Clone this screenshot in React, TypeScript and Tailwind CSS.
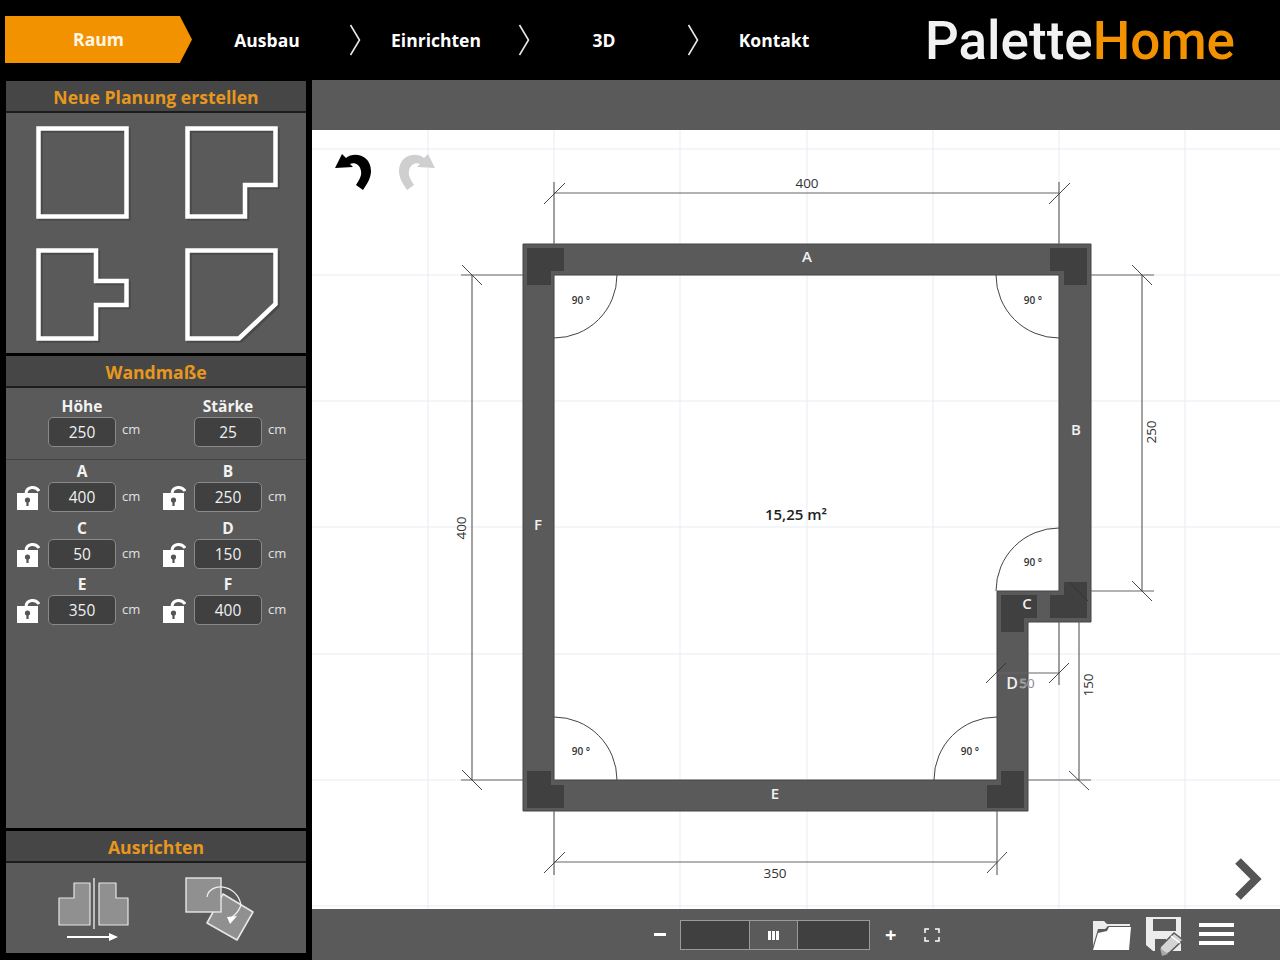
import React from "react";

const font = "[font-family:'Open_Sans',sans-serif]";

const Chevron = () => (
  <svg width="12" height="32" viewBox="0 0 12 32" className="shrink-0">
    <path d="M1.5 1 L10.5 16 L1.5 31" fill="none" stroke="#e8e8e8" strokeWidth="1.6" />
  </svg>
);

const NavItem = ({ label }: { label: string }) => (
  <div className="w-[150px] text-center text-[17.5px] font-bold text-white">{label}</div>
);

const Header = () => (
  <div className="h-20 flex items-center shrink-0 bg-black">
    <div className="ml-[5px] w-[187px] h-[47px] mt-[-1px] bg-[#f39200] flex items-center justify-center text-[17.5px] font-bold text-[#fff6e5] [clip-path:polygon(0_0,93.5%_0,100%_50%,93.5%_100%,0_100%)]">
      Raum
    </div>
    <NavItem label="Ausbau" />
    <div className="w-[19px] flex justify-center pl-[7px]">
      <Chevron />
    </div>
    <NavItem label="Einrichten" />
    <div className="w-[18px] flex justify-center pl-[7px]">
      <Chevron />
    </div>
    <NavItem label="3D" />
    <div className="w-[20px] flex justify-center pl-[7px]">
      <Chevron />
    </div>
    <NavItem label="Kontakt" />
    <div className="ml-[76px] flex text-[53px] leading-none font-medium [font-family:'Roboto',sans-serif] mt-[2px]">
      <span className="text-[#f2f2f2]">Palette</span>
      <span className="text-[#f39200]">Home</span>
    </div>
  </div>
);

const PanelTitle = ({ children }: { children: React.ReactNode }) => (
  <div className="h-[32px] shrink-0 pt-[2px] bg-[#464646] border-b-2 border-[#1c1c1c] flex items-center justify-center text-[17.6px] font-bold text-[#e8971e]">
    {children}
  </div>
);

const Shape = ({ d }: { d: string }) => (
  <svg width="98" height="98" viewBox="0 0 98 98" className="shrink-0 overflow-visible">
    <path d={d} fill="none" stroke="#000" strokeOpacity="0.18" strokeWidth="4.5" transform="translate(2 2)" />
    <path d={d} fill="none" stroke="#fff" strokeWidth="4.5" />
  </svg>
);

const shapes = [
  "M2.5 2.5H90.5V90.5H2.5Z",
  "M2.5 2.5H90.5V59H60V90.5H2.5Z",
  "M2.5 2.5H60V33H90.5V57H60V90.5H2.5Z",
  "M2.5 2.5H90.5V56L54 90.5H2.5Z",
];

const Lock = () => (
  <svg width="24" height="26" viewBox="0 0 24 26" className="shrink-0">
    <path d="M10 8 C11 1 20 1 23 6" fill="none" stroke="#fff" strokeWidth="3" />
    <rect x="1" y="8" width="21" height="17" fill="#fff" />
    <circle cx="11.5" cy="15" r="2.6" fill="#555" />
    <rect x="10.4" y="15" width="2.2" height="6" fill="#555" />
  </svg>
);

const NumberBox = ({ value }: { value: string }) => (
  <div className="w-[68px] h-[30px] pt-[2px] rounded-[5px] border border-[#8a8a8a] bg-[#404040] flex items-center justify-center text-[15.5px] text-[#f0f0f0]">
    {value}
  </div>
);

const Field = ({ label, value, lock }: { label: string; value: string; lock?: boolean }) => (
  <div className="w-[146px] flex flex-col">
    <div className="pl-[42px] w-[110px] text-center text-[15.5px] leading-[20px] font-bold text-[#f2f2f2] mt-[-1px]">{label}</div>
    <div className="flex items-start mt-[1px]">
      <div className="w-[42px] pl-[10px] pt-[3px]">{lock && <Lock />}</div>
      <NumberBox value={value} />
      <span className={"ml-[6px] text-[13px] leading-[20px] text-[#e0e0e0] " + (lock ? "mt-[4px]" : "mt-[2px]")}>cm</span>
    </div>
  </div>
);

const walls = [
  ["A", "400", "B", "250"],
  ["C", "50", "D", "150"],
  ["E", "350", "F", "400"],
];

const Sidebar = () => (
  <div className="w-[312px] shrink-0 pl-[6px] pr-[6px] pt-[1px] flex flex-col gap-[3px] bg-black">
    <div className="h-[272px] flex flex-col bg-[#5a5a5a]">
      <PanelTitle>Neue Planung erstellen</PanelTitle>
      <div className="pl-[30px] pt-[13px] grid grid-cols-[149px_98px] gap-y-[24px]">
        {shapes.map((d) => (
          <Shape key={d} d={d} />
        ))}
      </div>
    </div>
    <div className="h-[472px] flex flex-col bg-[#5a5a5a]">
      <PanelTitle>Wandmaße</PanelTitle>
      <div className="h-[72px] border-b border-[#444] pt-[9px] flex">
        <Field label="Höhe" value="250" />
        <Field label="Stärke" value="25" />
      </div>
      <div className="pt-[2px] flex flex-col gap-[6.5px]">
        {walls.map((r) => (
          <div key={r[0]} className="flex">
            <Field label={r[0]} value={r[1]} lock />
            <Field label={r[2]} value={r[3]} lock />
          </div>
        ))}
      </div>
    </div>
    <div className="h-[122px] flex flex-col bg-[#5a5a5a]">
      <PanelTitle>Ausrichten</PanelTitle>
      <div className="pt-[14px] pl-[52px] flex items-start gap-[47px]">
        <svg width="80" height="68" viewBox="0 0 80 68">
          <path d="M16 6H32V48H1V21H16Z" fill="#909090" stroke="#e6e6e6" strokeWidth="1.2" strokeLinejoin="round" />
          <path d="M41 6H58V21H70V48H41Z" fill="#909090" stroke="#e6e6e6" strokeWidth="1.2" strokeLinejoin="round" />
          <path d="M36 1V52" stroke="#e6e6e6" strokeWidth="1.4" />
          <path d="M9 60H52" stroke="#fff" strokeWidth="2" />
          <path d="M51 56L60 60L51 64Z" fill="#fff" />
        </svg>
        <svg width="72" height="68" viewBox="0 0 72 68">
          <path d="M38 17L68 35L52 63L22 46Z" fill="#909090" stroke="#e6e6e6" strokeWidth="1.6" strokeLinejoin="round" />
          <rect x="1" y="1" width="35" height="34" fill="#909090" stroke="#e6e6e6" strokeWidth="1.4" />
          <path d="M22 20C24 5 52 6 56 28" fill="none" stroke="#eee" strokeWidth="1.3" />
          <path d="M56 28C54 34 50 38 47 40" fill="none" stroke="#eee" strokeWidth="1.3" />
          <path d="M42 40L52 39L45 47Z" fill="#fff" />
        </svg>
      </div>
    </div>
  </div>
);

const gridX = [428, 554, 680, 807, 933, 1059, 1185];
const gridY = [149, 275, 401, 527, 654, 780, 906];

// dark corner pieces of the walls
const corners = [
  "527,248 564,248 564,271 551,271 551,285 527,285",
  "1050,248 1087,248 1087,285 1064,285 1064,271 1050,271",
  "1001,595 1037,595 1037,618 1024,618 1024,632 1001,632",
  "1064,582 1087,582 1087,618 1050,618 1050,595 1064,595",
  "1001,771 1024,771 1024,808 987,808 987,785 1001,785",
  "527,771 551,771 551,785 564,785 564,808 527,808",
];

// dimension lines
const dims = [
  "M554 193H1059M554 182V244M1059 182V244",
  "M472 275V780M461 275H523M461 780H523",
  "M1142 275V591M1091 275H1154M1091 591H1154",
  "M1079 622V780M1028 780H1091",
  "M997 673H1059M1059 622V685",
  "M554 862H997M554 811V875M997 811V875",
];

const ticks = [
  "M544 204L565 183",
  "M1049 204L1070 183",
  "M462 265L482 285",
  "M462 770L482 790",
  "M1132 265L1152 285",
  "M1132 581L1152 601",
  "M1069 582L1088 601",
  "M1069 771L1089 790",
  "M986 683L1006 663",
  "M1049 683L1069 663",
  "M544 873L565 852",
  "M987 873L1007 852",
];

const arcs = [
  "M617 275A63 63 0 0 1 554 338",
  "M996 275A63 63 0 0 0 1059 338",
  "M1059 528A63 63 0 0 0 996 591",
  "M554 717A63 63 0 0 1 617 780",
  "M997 717A63 63 0 0 0 934 780",
];

const angleLabels = [
  [581, 304],
  [1033, 304],
  [1033, 566],
  [581, 755],
  [970, 755],
];

const wallLabels = [
  ["A", 807, 262],
  ["B", 1076, 435],
  ["C", 1027, 609],
  ["D", 1012, 689],
  ["E", 775, 799],
  ["F", 538, 530],
] as const;

const FloorPlan = () => (
  <svg viewBox="312 130 968 779" className="block w-full h-full">
    {gridX.map((x) => (
      <path key={x} d={`M${x} 130V909`} stroke="#e9ebf4" strokeWidth="1" />
    ))}
    {gridY.map((y) => (
      <path key={y} d={`M312 ${y}H1280`} stroke="#e9ebf4" strokeWidth="1" />
    ))}
    <path
      d="M523 244H1091V622H1028V811H523ZM554 275V780H997V591H1059V275Z"
      fill="#5a5a5a"
      fillRule="evenodd"
      stroke="#444"
      strokeWidth="1"
    />
    {corners.map((p) => (
      <polygon key={p} points={p} fill="#404040" />
    ))}
    {dims.map((d) => (
      <path key={d} d={d} fill="none" stroke="#666" strokeWidth="1.2" />
    ))}
    {ticks.map((d) => (
      <path key={d} d={d} fill="none" stroke="#333" strokeWidth="0.9" />
    ))}
    {arcs.map((d) => (
      <path key={d} d={d} fill="none" stroke="#444" strokeWidth="1" />
    ))}
    {angleLabels.map(([x, y]) => (
      <text key={`${x}-${y}`} x={x} y={y} textAnchor="middle" fontSize="10" fontWeight="600" fill="#333">
        90 °
      </text>
    ))}
    <g fontSize="13.5" fill="#333" textAnchor="middle">
      <text x="807" y="188">400</text>
      <text x="775" y="878">350</text>
      <text x="1027" y="688" stroke="#fff" strokeWidth="0.7" strokeOpacity="0.6">50</text>
      <text transform="translate(466 528) rotate(-90)">400</text>
      <text transform="translate(1156 432) rotate(-90)">250</text>
      <text transform="translate(1093 685) rotate(-90)">150</text>
    </g>
    {wallLabels.map(([t, x, y]) => (
      <text key={t} x={x} y={y} textAnchor="middle" fontSize={t === "D" ? 16 : 15} fontWeight="600" fill="#f0f0f0">
        {t}
      </text>
    ))}
    <text x="796" y="520" textAnchor="middle" fontSize="15" fontWeight="600" fill="#222">
      15,25 m²
    </text>
  </svg>
);

const UndoArrow = ({ color, flip }: { color: string; flip?: boolean }) => (
  <svg width="38" height="40" viewBox="0 0 38 40" className={flip ? "-scale-x-100" : ""}>
    <path
      d="M1 17L8 3L12 7C20 0 37 4 37 20C37 27 33 33 29 39L22 34C25 29 28 25 27 20C26 13 20 11 16 13L19 16Z"
      fill={color}
    />
  </svg>
);

const Toolbar = () => (
  <div className="h-[51px] shrink-0 bg-[#5a5a5a] flex items-center relative">
    <span className="ml-[342px] w-[12px] h-[3px] bg-white" />
    <div className="ml-[14px] w-[190px] h-[30px] flex border border-[#9a9a9a] bg-[#404040] mt-[1px]">
      <div className="ml-[68px] w-[49px] border-x border-[#9a9a9a] bg-[#5a5a5a] flex items-center justify-center gap-[1.5px]">
        <span className="w-[2.5px] h-[9px] bg-white" />
        <span className="w-[2.5px] h-[9px] bg-white" />
        <span className="w-[2.5px] h-[9px] bg-white" />
      </div>
    </div>
    <span className="ml-[15px] text-[20px] leading-none font-bold text-white">+</span>
    <svg width="16" height="14" viewBox="0 0 16 14" className="ml-[28px] mt-[1px]">
      <path d="M5 1H1V5M11 1H15V5M5 13H1V9M11 13H15V9" fill="none" stroke="#fff" strokeWidth="1.5" />
    </svg>
    <svg width="38" height="31" viewBox="0 0 38 31" className="ml-[153px] mt-[1px]">
      <path d="M0 1H11L14 4H37V6H15L12 9H5L0 26Z" fill="#ececec" />
      <path d="M0 30L5 13L14 11L16 7H38L36 30Z" fill="#fff" />
    </svg>
    <svg width="38" height="40" viewBox="0 0 38 40" className="ml-[15px] mt-[5px] overflow-visible">
      <path d="M0 0H35V34H7L0 28Z" fill="#ececec" />
      <path d="M7 2H30V14H7Z" fill="#5a5a5a" />
      <rect x="9" y="22" width="11" height="12" fill="#5a5a5a" />
      <path d="M14 30L28 16L37 23L23 36L16 39Z" fill="#d4d4d4" stroke="#5a5a5a" strokeWidth="1.5" />
      <path d="M25 19L34 26" stroke="#fff" strokeWidth="1.5" />
      <path d="M14 31L22 37L16 39Z" fill="#a8a8a8" />
    </svg>
    <div className="ml-[15px] w-[35px] flex flex-col gap-[5px] mt-[-1px]">
      <span className="h-[4px] bg-white" />
      <span className="h-[4px] bg-white" />
      <span className="h-[4px] bg-white" />
    </div>
  </div>
);

const Canvas = () => (
  <div className="flex-1 min-h-0 relative bg-white">
    <FloorPlan />
    <div className="absolute left-[22px] top-[21px] flex gap-[26px]">
      <UndoArrow color="#000" />
      <UndoArrow color="#cfcfcf" flip />
    </div>
    <svg width="28" height="42" viewBox="0 0 28 42" className="absolute left-[922px] top-[728px]">
      <path d="M4 3L22 21L4 39" fill="none" stroke="#555" strokeWidth="8" />
    </svg>
  </div>
);

export default function App() {
  return (
    <div className={"w-[1280px] h-[960px] flex flex-col overflow-hidden bg-black " + font}>
      <Header />
      <div className="flex-1 min-h-0 flex">
        <Sidebar />
        <div className="flex-1 flex flex-col min-w-0">
          <div className="h-[50px] shrink-0 bg-[#5a5a5a]" />
          <Canvas />
          <Toolbar />
        </div>
      </div>
    </div>
  );
}
